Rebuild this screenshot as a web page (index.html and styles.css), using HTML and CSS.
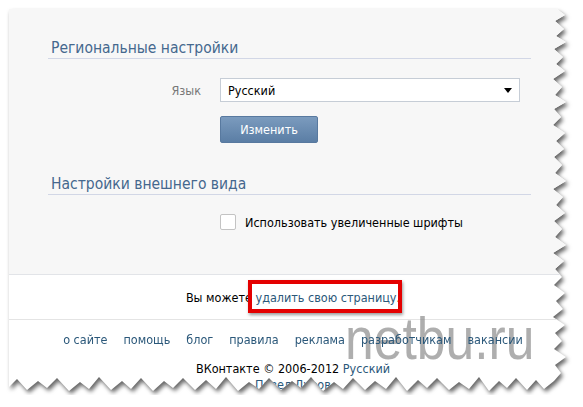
FILE: index.html
```html
<!DOCTYPE html>
<html lang="ru">
<head>
<meta charset="utf-8">
<title>Настройки</title>
<link rel="stylesheet" href="styles.css">
</head>
<body>
<div class="sheet">
  <div class="page">
    <section class="settings">
      <h2 class="section-title">Региональные настройки</h2>
      <div class="form-row">
        <span class="form-label">Язык</span>
        <div class="select"><span class="select-value">Русский</span><i class="select-arrow"></i></div>
      </div>
      <div class="form-actions"><button class="button" type="button">Изменить</button></div>
      <h2 class="section-title second">Настройки внешнего вида</h2>
      <div class="check-row"><span class="checkbox"></span><span class="check-label">Использовать увеличенные шрифты</span></div>
    </section>
    <div class="delete-row">Вы можете&nbsp;<span class="highlight"><a class="link" href="#">удалить свою страницу</a>.</span></div>
    <footer class="footer">
      <nav class="footer-links">
        <a class="link" href="#">о сайте</a>
        <a class="link" href="#">помощь</a>
        <a class="link" href="#">блог</a>
        <a class="link" href="#">правила</a>
        <a class="link" href="#">реклама</a>
        <a class="link" href="#">разработчикам</a>
        <a class="link" href="#">вакансии</a>
      </nav>
      <div class="copyright">ВКонтакте © 2006-2012 <a class="link" href="#">Русский</a></div>
      <div class="author"><a class="link" href="#">Павел Дуров</a></div>
    </footer>
    <div class="watermark">netbu.ru</div>
  </div>
</div>
</body>
</html>
```

FILE: styles.css
```css
body {
  margin: 0;
  background: #fff;
  font-family: "DejaVu Sans Condensed", "DejaVu Sans", sans-serif;
  font-stretch: condensed;
  font-size: 12.5px;
  color: #000;
}

.sheet {
  margin: 9px 0 0 9px;
  width: 568px;
  height: 386px;
  filter: drop-shadow(2px 3px 2px rgba(0, 0, 0, 0.6));
}

.page {
  position: relative;
  width: 568px;
  height: 386px;
  background: #fff;
  display: flex;
  flex-direction: column;
  clip-path: polygon(0 0, 548px 0, 556px 6px, 546px 12px, 555px 20px, 547px 27px, 557px 33px, 545px 40px, 554px 48px, 547px 55px, 556px 62px, 544px 70px, 553px 78px, 546px 86px, 557px 93px, 545px 100px, 552px 108px, 544px 116px, 556px 124px, 547px 132px, 555px 140px, 545px 148px, 553px 156px, 546px 164px, 557px 172px, 544px 180px, 554px 188px, 547px 196px, 556px 204px, 545px 212px, 553px 220px, 546px 228px, 557px 236px, 544px 244px, 555px 252px, 546px 260px, 553px 268px, 545px 276px, 556px 284px, 547px 292px, 554px 300px, 544px 308px, 556px 316px, 546px 324px, 553px 332px, 545px 340px, 557px 348px, 546px 356px, 552px 364px, 545px 372px, 535px 380px, 527px 371px, 518px 381px, 507px 369px, 498px 379px, 490px 372px, 480px 382px, 470px 368px, 460px 380px, 450px 373px, 440px 381px, 428px 369px, 418px 379px, 409px 371px, 398px 382px, 387px 368px, 377px 380px, 366px 372px, 356px 381px, 344px 369px, 334px 380px, 325px 373px, 314px 382px, 302px 368px, 292px 379px, 283px 372px, 272px 381px, 260px 369px, 250px 380px, 240px 373px, 229px 382px, 217px 368px, 207px 380px, 197px 371px, 186px 381px, 174px 369px, 164px 379px, 155px 372px, 144px 382px, 132px 369px, 122px 380px, 113px 372px, 102px 381px, 90px 368px, 80px 380px, 71px 373px, 60px 382px, 48px 369px, 38px 379px, 29px 372px, 18px 381px, 8px 370px, 0 378px);
}

.settings {
  background: #f7f7f7;
  padding: 29px 46px 44px 39px;
  border-bottom: 1px solid #e2e4e8;
}

.section-title {
  margin: 0;
  padding-left: 3px;
  font-weight: normal;
  font-size: 15.5px;
  line-height: 20px;
  color: #45688e;
  border-bottom: 1px solid #d2d7e6;
}

.section-title.second {
  margin-top: 31px;
}

.form-row {
  display: flex;
  align-items: center;
  height: 24px;
  margin-top: 19px;
}

.form-label {
  width: 153px;
  margin-right: 19px;
  text-align: right;
  color: #777;
}

.select {
  box-sizing: border-box;
  width: 300px;
  height: 24px;
  padding: 0 7px;
  display: flex;
  align-items: center;
  justify-content: space-between;
  background: #fff;
  border: 1px solid #c6cdd6;
}

.select-arrow {
  width: 0;
  height: 0;
  border-left: 4px solid transparent;
  border-right: 4px solid transparent;
  border-top: 5px solid #000;
}

.form-actions {
  display: flex;
  margin-top: 14px;
  padding-left: 172px;
}

.button {
  width: 98px;
  height: 27px;
  padding: 0;
  border: 1px solid #58799f;
  border-radius: 2px;
  background: linear-gradient(#7b9bbe, #5b7ea5);
  color: #fff;
  font: inherit;
}

.check-row {
  display: flex;
  align-items: center;
  height: 16px;
  margin-top: 19px;
  padding-left: 172px;
}

.checkbox {
  width: 14px;
  height: 14px;
  margin-right: 9px;
  background: #fff;
  border: 1px solid #c3c3c3;
  border-radius: 2px;
}

.delete-row {
  height: 44px;
  display: flex;
  align-items: center;
  justify-content: center;
  border-bottom: 1px solid #e4e4e4;
}

.highlight {
  position: relative;
}

.highlight::after {
  content: "";
  position: absolute;
  top: -10px;
  bottom: -8px;
  left: -8px;
  right: -2px;
  border: 4px solid #e40000;
  box-shadow: 1px 2px 3px rgba(0, 0, 0, 0.4);
}

.footer {
  padding-top: 12px;
  text-align: center;
  line-height: 16px;
}

.footer-links {
  position: relative;
  z-index: 1;
  display: flex;
  justify-content: center;
  gap: 16px;
}

.copyright {
  margin-top: 13px;
}

.link {
  color: #2b587a;
  text-decoration: none;
}

.watermark {
  position: absolute;
  left: 336px;
  top: 300px;
  font-family: "Liberation Sans", sans-serif;
  font-size: 60px;
  line-height: 60px;
  color: rgba(130, 130, 130, 0.65);
  transform: scaleX(0.86);
  transform-origin: left top;
}
```
